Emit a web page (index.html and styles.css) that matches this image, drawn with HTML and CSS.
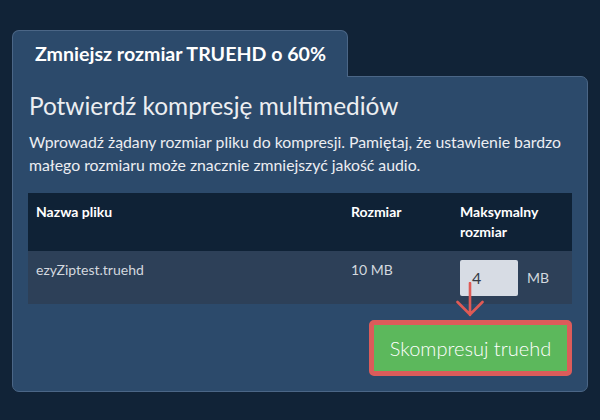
FILE: index.html
```html
<!DOCTYPE html>
<html lang="pl">
<head>
<meta charset="utf-8">
<link rel="stylesheet" href="styles.css">
</head>
<body>
<div class="wrap">
  <div class="tab">Zmniejsz rozmiar TRUEHD o 60%</div>
  <div class="panel">
    <h1 class="title">Potwierdź kompresję multimediów</h1>
    <p class="desc">Wprowadź żądany rozmiar pliku do kompresji. Pamiętaj, że ustawienie bardzo małego rozmiaru może znacznie zmniejszyć jakość audio.</p>
    <table class="files">
      <thead>
        <tr>
          <th class="c-name">Nazwa pliku</th>
          <th class="c-size">Rozmiar</th>
          <th class="c-max">Maksymalny<br>rozmiar</th>
        </tr>
      </thead>
      <tbody>
        <tr>
          <td class="c-name">ezyZiptest.truehd</td>
          <td class="c-size">10 MB</td>
          <td class="c-max"><div class="maxcell"><span class="inp">4</span><span class="unit">MB</span></div></td>
        </tr>
      </tbody>
    </table>
    <div class="actions">
      <div class="btn-frame"><button class="btn">Skompresuj truehd</button></div>
    </div>
    <svg class="arrow" width="30" height="40" viewBox="0 0 30 40">
      <path d="M15 1 V33 M2.5 20 L15 32.5 L27.5 20" fill="none" stroke="#df5a55" stroke-width="2.6" stroke-linecap="round" stroke-linejoin="round"/>
    </svg>
  </div>
</div>
</body>
</html>
```
FILE: styles.css
```css
* { box-sizing: border-box; }
html, body { margin: 0; padding: 0; }
body {
  background: #112337;
  font-family: Lato, "Noto Sans", sans-serif;
  width: 600px;
  height: 420px;
  overflow: hidden;
}
.wrap {
  padding: 30px 12px 0 12px;
}
.tab {
  position: relative;
  z-index: 2;
  width: 336px;
  height: 47px;
  margin-bottom: -1px;
  background: #2c4a6b;
  border: 1px solid #4b6686;
  border-bottom: none;
  border-radius: 7px 7px 0 0;
  color: #ffffff;
  font-weight: 700;
  font-size: 19.6px;
  line-height: 24px;
  padding: 11px 0 0 22px;
}
.panel {
  position: relative;
  width: 576px;
  background: #2c4a6b;
  border: 1px solid #4b6686;
  border-radius: 0 7px 7px 7px;
  padding: 14px 15px 15px 15px;
}
.title {
  margin: 0;
  padding-left: 1px;
  font-size: 24.4px;
  font-weight: 400;
  color: #eceef1;
  line-height: 30px;
}
.desc {
  margin: 9px 0 0 0;
  padding-left: 1px;
  font-size: 15.8px;
  font-weight: 400;
  line-height: 23px;
  color: #eceef2;
}
.files {
  margin: 17px 0 0 0;
  width: 544px;
  border-collapse: collapse;
  font-size: 14px;
}
.files th {
  background: #0f2236;
  color: #ffffff;
  font-weight: 700;
  text-align: left;
  vertical-align: top;
  line-height: 20px;
  padding: 9px 8px 9px 8px;
}
.files td {
  background: #2d4058;
  color: #d3d8df;
  vertical-align: top;
  line-height: 20px;
  padding: 9px 8px 8px 8px;
}
.c-name { width: 315px; }
.c-size { width: 109px; }
.maxcell {
  display: flex;
  align-items: center;
  gap: 9px;
}
.inp {
  display: block;
  width: 58px;
  height: 36px;
  background: #d7dce4;
  border-radius: 2px;
  color: #333a44;
  font-size: 16px;
  line-height: 20px;
  padding: 8px 0 0 12px;
}
.unit {
  color: #d3d8df;
  font-size: 14px;
}
.actions {
  display: flex;
  justify-content: flex-end;
  margin-top: 16px;
}
.btn-frame {
  border: 5px solid #dc5c5a;
  border-radius: 5px;
  background: #dc5c5a;
}
.btn {
  display: block;
  width: 193px;
  height: 46px;
  border: none;
  border-radius: 0;
  background: #5cb85c;
  color: #ffffff;
  font-family: Lato, "Noto Sans", sans-serif;
  font-size: 20px;
  font-weight: 300;
  padding: 0;
}
.arrow {
  position: absolute;
  left: 442px;
  top: 205px;
}
```
